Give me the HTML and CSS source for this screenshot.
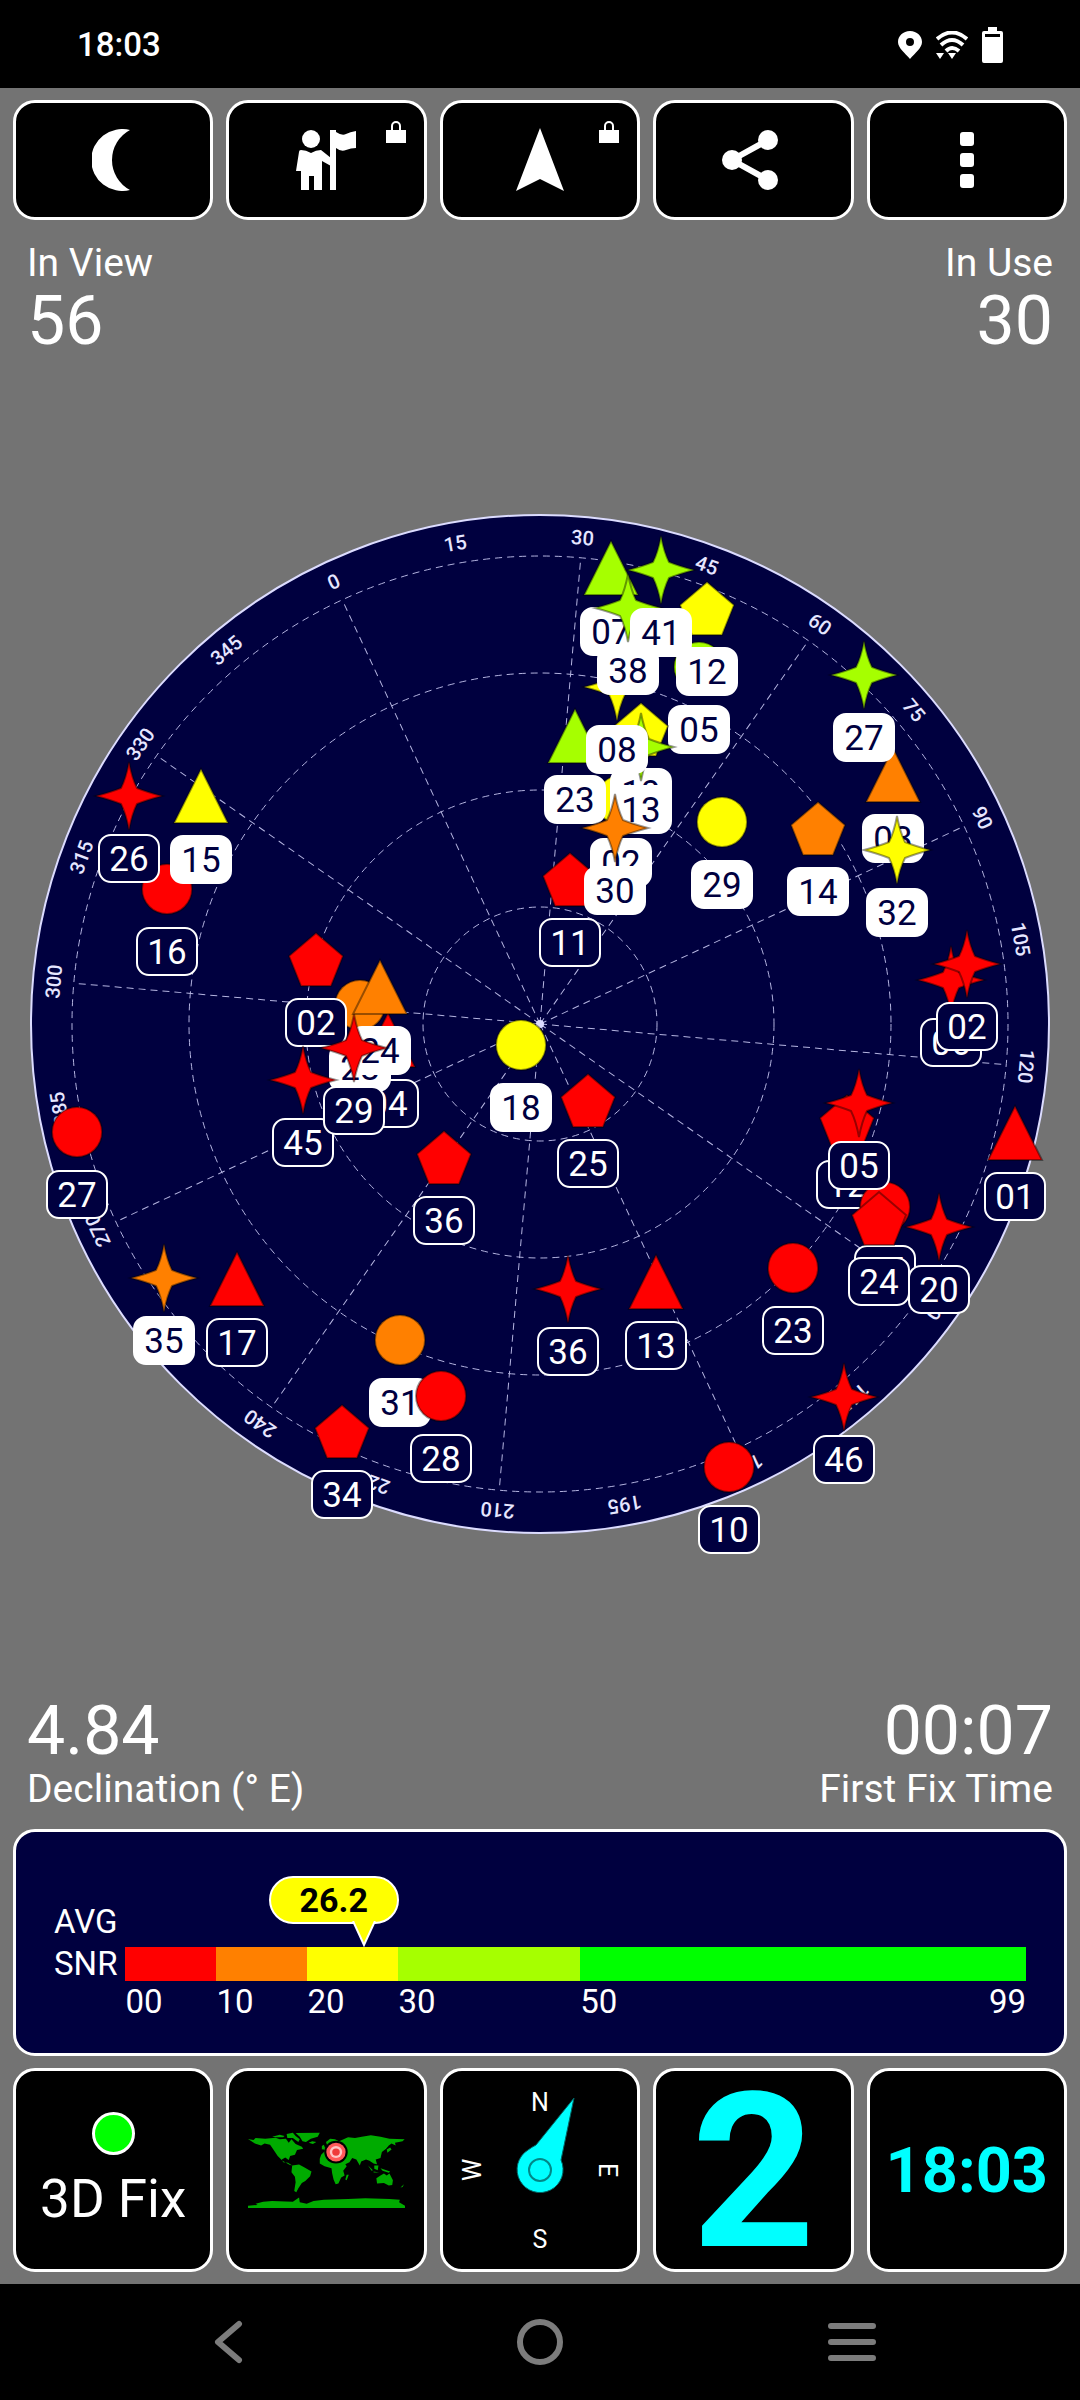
FILE: index.html
```html
<!DOCTYPE html>
<html lang="en">
    <head>
        <meta charset="utf-8">
        <meta name="viewport" content="width=device-width, initial-scale=1">
        <title>GNSS Status</title>

        <link rel="stylesheet" href="styles.css">
        <script src="sky.js" defer></script>
    </head>

    <body>
        <header class="status-bar">
            <span class="status-time">18:03</span>
            <div class="status-icons">
                <svg width="24" height="28" viewBox="0 0 24 28"><path fill="#fff" fill-rule="evenodd" d="M12 0C5 0 0 5 0 11C0 17 7 22 12 28C17 22 24 17 24 11C24 5 19 0 12 0ZM12 7A4 4 0 1 1 12 15A4 4 0 1 1 12 7Z"/></svg>
                <svg width="32" height="28" viewBox="0 0 32 28">
                    <g fill="none" stroke="#fff" stroke-width="4">
                        <path d="M1 8Q16 -5 31 8"/>
                        <path d="M5 14Q16 4 27 14"/>
                        <path d="M10 20Q16 14 23 20"/>
                    </g>
                    <path fill="#fff" d="M0 22h8l-4 6zM12 22h8l-4 6z"/>
                </svg>
                <svg width="21" height="36" viewBox="0 0 21 36"><path fill="#fff" fill-rule="evenodd" d="M6 0H15V4H19Q21 4 21 6V34Q21 36 19 36H2Q0 36 0 34V6Q0 4 2 4H6ZM3 7V10H18V7Z"/></svg>
            </div>
        </header>

        <main>
            <div class="toolbar">
                <button type="button" class="tool" aria-label="Night mode">
                    <svg width="42" height="62" viewBox="0 0 42 62"><path fill="#fff" d="M38 1A31 31 0 1 0 38 61A34 34 0 0 1 38 1Z"/></svg>
                </button>
                <button type="button" class="tool" aria-label="Waypoints, locked">
                    <svg width="62" height="60" viewBox="0 0 62 60">
                        <circle cx="15" cy="9" r="9" fill="#fff"/>
                        <path fill="#fff" d="M34 0H40V60H34ZM40 2Q46 6 50 4T60 1V18Q55 18 50 20T40 18Z"/>
                        <path fill="#fff" d="M5 20Q10 20 15 23Q20 20 25 20L35 28V36L26 31V60H18V46H13V60H5V41H0L3 22Q3 20 5 20Z"/>
                    </svg>
                    <svg class="lock" width="20" height="22" viewBox="0 0 20 22"><path fill="#fff" d="M0 9H20V22H0Z"/><path fill="none" stroke="#fff" stroke-width="2" d="M6 10V5A4 4 0 0 1 14 5V10"/></svg>
                </button>
                <button type="button" class="tool" aria-label="Navigate, locked">
                    <svg width="48" height="64" viewBox="0 0 48 64"><path fill="#fff" d="M24 0L48 63L24 51L0 63Z"/></svg>
                    <svg class="lock" width="20" height="22" viewBox="0 0 20 22"><path fill="#fff" d="M0 9H20V22H0Z"/><path fill="none" stroke="#fff" stroke-width="2" d="M6 10V5A4 4 0 0 1 14 5V10"/></svg>
                </button>
                <button type="button" class="tool" aria-label="Share">
                    <svg width="62" height="60" viewBox="0 0 62 60">
                        <path fill="none" stroke="#fff" stroke-width="6" d="M46 10L10 30L46 50"/>
                        <g fill="#fff"><circle cx="46" cy="10" r="10"/><circle cx="10" cy="30" r="10"/><circle cx="46" cy="50" r="10"/></g>
                    </svg>
                </button>
                <button type="button" class="tool" aria-label="More options">
                    <svg width="14" height="56" viewBox="0 0 14 56" fill="#fff"><rect width="14" height="14" rx="3"/><rect y="21" width="14" height="14" rx="3"/><rect y="42" width="14" height="14" rx="3"/></svg>
                </button>
            </div>

            <div class="info-row info-top">
                <div class="info">
                    <div class="info-label">In View</div>
                    <div class="info-value">56</div>
                </div>
                <div class="info info-right">
                    <div class="info-label">In Use</div>
                    <div class="info-value">30</div>
                </div>
            </div>

            <div class="sky">
                <svg class="sky-plot" id="sky_plot" viewBox="-540 -518 1080 1040" role="img" aria-label="Satellite sky view"></svg>
            </div>

            <div class="info-row info-bottom">
                <div class="info">
                    <div class="info-value">4.84</div>
                    <div class="info-label">Declination (° E)</div>
                </div>
                <div class="info info-right">
                    <div class="info-value">00:07</div>
                    <div class="info-label">First Fix Time</div>
                </div>
            </div>

            <section class="snr">
                <div class="snr-name">AVG<br>SNR</div>
                <div class="snr-meter">
                    <div class="snr-bubble" style="left: 26.46%">26.2</div>
                    <svg class="snr-pointer" style="left: 26.46%" width="24" height="26" viewBox="0 0 24 26"><path fill="#ff0" stroke="#fff" stroke-width="2" d="M1 0L12 24L23 0"/></svg>
                    <div class="snr-seg seg-10"><i class="red"></i><span>00</span></div>
                    <div class="snr-seg seg-10"><i class="orange"></i><span>10</span></div>
                    <div class="snr-seg seg-10"><i class="yellow"></i><span>20</span></div>
                    <div class="snr-seg seg-20"><i class="lime"></i><span>30</span></div>
                    <div class="snr-seg seg-49"><i class="green"></i><span>50</span><span>99</span></div>
                </div>
            </section>

            <div class="tiles">
                <div class="tile tile-fix">
                    <span class="fix-light"></span>
                    <span class="fix-text">3D Fix</span>
                </div>
                <div class="tile">
                    <svg width="157" height="76" viewBox="720 250 455 227" preserveAspectRatio="none">
                        <g fill="#00ab00">
                            <path d="M720 271L736 274L742 268L770 270L800 267L812 272L830 270L838 282L846 272L858 286L876 294L880 300L862 304L856 318L842 322L838 334L828 326L818 332L822 340L836 342L848 350L840 348L820 336L806 322L792 300L784 288L768 284L758 290L740 284Z"/>
                            <path d="M790 264L812 258L826 262L822 266L800 266ZM832 256L850 252L858 262L870 272L866 280L850 268L834 268Z"/>
                            <path d="M858 253L928 252L922 264L902 270L888 280L878 278L870 264Z"/>
                            <path d="M848 350L868 347L884 356L904 368L900 382L886 396L876 402L866 418L860 430L854 426L858 400L856 384L846 370Z"/>
                            <path d="M932 318L944 306L938 302L950 292L946 280L958 270L972 272L984 278L1010 266L1030 268L1050 264L1076 260L1104 264L1130 270L1174 272L1168 278L1146 282L1148 290L1136 284L1128 290L1120 300L1108 310L1104 328L1090 332L1094 346L1084 344L1072 336L1062 332L1048 338L1044 350L1034 332L1022 328L1014 340L1002 346L1006 352L996 366L1000 380L990 386L982 404L974 406L968 392L964 374L962 358L942 352L928 344L928 330Z"/>
                            <path d="M1006 378L1012 378L1006 394L1002 392ZM1068 350L1082 364L1078 366ZM1086 350L1098 350L1096 364L1086 360ZM1104 358L1132 368L1128 372L1110 366ZM1084 368L1100 371L1084 371Z"/>
                            <path d="M1092 388L1104 380L1114 374L1122 380L1130 374L1140 394L1138 408L1128 410L1114 402L1094 404Z"/>
                            <path d="M1162 416L1172 406L1168 414ZM1122 302L1132 296L1136 302L1124 312ZM934 292L940 288L944 300L934 302ZM896 282L906 278L918 280L908 286Z"/>
                            <path d="M720 470L748 468L742 464L764 458L790 456L850 458L868 446L870 460L890 464L910 456L940 452L1010 450L1060 448L1130 450L1160 452L1158 460L1175 470V477H720Z"/>
                        </g>
                        <circle cx="975" cy="310" r="34" fill="#000"/>
                        <circle cx="975" cy="310" r="28" fill="#ff5a5a"/>
                        <circle cx="975" cy="310" r="18" fill="#ffc4c4"/>
                        <circle cx="975" cy="310" r="11" fill="#ef3a3a"/>
                    </svg>
                </div>
                <div class="tile">
                    <svg class="compass" width="184" height="184" viewBox="-12 -12 184 184">
                        <text x="80" y="21">N</text>
                        <text x="80" y="158">S</text>
                        <text x="12" y="89" transform="rotate(-90 12 80)">W</text>
                        <text x="148" y="89" transform="rotate(90 148 80)">E</text>
                        <path fill="#0ff" stroke="#066" d="M114 8L101 70A23 23 0 1 1 68 60Q72 57 76 55Z"/>
                        <circle cx="80" cy="80" r="11" fill="#0ff" stroke="#088" stroke-width="2"/>
                    </svg>
                </div>
                <div class="tile tile-count">2</div>
                <div class="tile tile-clock">18:03</div>
            </div>
        </main>

        <nav class="nav-bar">
            <button type="button" aria-label="Back">
                <svg width="30" height="44" viewBox="0 0 30 44"><path d="M26 4L5 22L26 40"/></svg>
            </button>
            <button type="button" aria-label="Home">
                <svg width="48" height="48" viewBox="0 0 48 48"><circle cx="24" cy="24" r="20"/></svg>
            </button>
            <button type="button" aria-label="Recent apps">
                <svg width="48" height="38" viewBox="0 0 48 38"><path d="M3 3H45M3 19H45M3 35H45"/></svg>
            </button>
        </nav>
    </body>
</html>
```
FILE: styles.css
```css
/* Page */
* {
    box-sizing: border-box;
}

body {
    margin: 0;
    min-height: 100vh;
    display: flex;
    flex-direction: column;
    font-family: Roboto, "Liberation Sans", sans-serif;
    background-color: #737373;
    color: #fff;
}

svg {
    display: block;
}

main {
    flex: 1;
    display: flex;
    flex-direction: column;
    padding: 12px 13px;
}

/* Status bar */
.status-bar {
    display: flex;
    justify-content: space-between;
    align-items: center;
    height: 88px;
    padding: 2px 77px 0;
    background: #000;
}

.status-time {
    font-size: 33px;
    font-weight: 500;
    line-height: 40px;
}

.status-icons {
    display: flex;
    align-items: center;
    gap: 14px;
}

/* Top buttons */
.toolbar,
.tiles {
    display: grid;
    grid-template-columns: repeat(5, 1fr);
    gap: 13px;
}

.tool,
.tile {
    position: relative;
    display: flex;
    align-items: center;
    justify-content: center;
    padding: 0;
    border: 3px solid #fff;
    border-radius: 22px;
    background: #000;
    color: #fff;
}

.tool {
    height: 120px;
    cursor: pointer;
}

.lock {
    position: absolute;
    top: 18px;
    right: 18px;
}

/* Corner readings */
.info-row {
    display: flex;
    justify-content: space-between;
    padding: 0 14px;
}

.info-top {
    padding-top: 20px;
}

.info-bottom {
    padding-bottom: 17px;
}

.info-right {
    text-align: right;
}

.info-label {
    font-size: 39px;
    line-height: 46px;
}

.info-value {
    font-size: 68px;
    line-height: 70px;
}

/* Sky view */
.sky {
    flex: 1;
    display: flex;
    align-items: center;
    margin: 0 -13px;
}

.sky-plot {
    width: 100%;
    overflow: visible;
}

.sky-disc {
    fill: #00003f;
    stroke: #dcdcff;
    stroke-width: 2;
}

.sky-grid {
    fill: none;
    stroke: #b4b4e0;
    stroke-width: 1;
    stroke-dasharray: 7 5;
}

.sky-angle {
    fill: #e6e6ff;
    font-size: 20px;
    font-weight: 500;
    text-anchor: middle;
}

.sat-icon {
    stroke: rgba(0, 0, 0, 0.4);
    stroke-width: 2;
}

.sat-box {
    fill: #00003f;
    stroke: #fff;
    stroke-width: 2;
}

.sat-text {
    fill: #fff;
    font-size: 35px;
    text-anchor: middle;
}

.used .sat-box {
    fill: #fff;
}

.used .sat-text {
    fill: #00003f;
}

/* Average SNR */
.snr {
    display: flex;
    gap: 8px;
    margin-bottom: 12px;
    padding: 69px 38px 30px;
    border: 3px solid #fff;
    border-radius: 22px;
    background: #00003f;
}

.snr-name,
.snr-seg {
    font-size: 33px;
    line-height: 42px;
}

.snr-meter {
    position: relative;
    flex: 1;
    display: flex;
    padding-top: 46px;
}

.snr-seg {
    display: flex;
    flex-wrap: wrap;
    justify-content: space-between;
    min-width: 0;
}

.snr-seg i {
    width: 100%;
    height: 34px;
}

.seg-10 { flex: 10 0 0; }
.seg-20 { flex: 20 0 0; }
.seg-49 { flex: 49 0 0; }

.red { background: #f00; }
.orange { background: #ff8000; }
.yellow { background: #ff0; }
.lime { background: #a6ff00; }
.green { background: #0f0; }

/* the pointer tip marks the value, the bubble sits left of it */
.snr-bubble {
    position: absolute;
    top: -25px;
    width: 130px;
    margin-left: -95px;
    border: 2px solid #fff;
    border-radius: 24px;
    background: #ff0;
    color: #000;
    font-size: 34px;
    font-weight: bold;
    line-height: 44px;
    text-align: center;
}

.snr-pointer {
    position: absolute;
    top: 20px;
    margin-left: -12px;
}

/* Bottom tiles */
.tile {
    height: 204px;
}

.tile-fix {
    flex-direction: column;
    gap: 14px;
}

.fix-light {
    width: 43px;
    height: 43px;
    border: 3px solid #fff;
    border-radius: 50%;
    background: #0f0;
}

.fix-text {
    font-size: 53px;
    line-height: 60px;
}

.compass text {
    fill: #fff;
    font-size: 25px;
    text-anchor: middle;
}

.tile-count,
.tile-clock {
    color: #0ff;
    font-weight: bold;
}

.tile-count {
    padding-top: 6px;
    font-size: 216px;
    line-height: 192px;
}

.tile-clock {
    font-size: 63px;
}

/* Navigation bar */
.nav-bar {
    display: grid;
    grid-template-columns: repeat(3, 1fr);
    height: 116px;
    padding: 0 72px;
    background: #000;
}

.nav-bar button {
    display: flex;
    align-items: center;
    justify-content: center;
    border: none;
    background: none;
    cursor: pointer;
}

.nav-bar svg {
    fill: none;
    stroke: #7c7c7c;
    stroke-width: 6;
    stroke-linecap: round;
    stroke-linejoin: round;
}
```
FILE: sky.js
```js
const NS = "http://www.w3.org/2000/svg";
const RADIUS = 509;
const RING = 117;
const HEADING = 25;

const COLORS = { r: "#ff0000", o: "#ff8000", y: "#ffff00", g: "#a6ff00" };

const SHAPES = {
    circle: "M-25 0A25 25 0 1 1 25 0A25 25 0 1 1 -25 0Z",
    tri: "M0 -28L27 26H-27Z",
    penta: "M0 -27L27 -4L15 26H-15L-27 -4Z",
    star: "M0 -34Q3 -18 8 -8Q18 -4 33 0Q18 4 8 8Q3 18 0 34Q-3 18 -8 8Q-18 4 -33 0Q-18 -4 -8 -8Q-3 -18 0 -34Z"
};

// [id, shape, color, x, y, used], drawn in this order
const SATS = [
    ["05", "circle", "g", 159, -357, 1],
    ["02", "circle", "y", 81, -224, 1],
    ["23", "tri", "g", 35, -287, 1],
    ["19", "penta", "y", 101, -294, 1],
    ["13", "star", "g", 101, -277, 1],
    ["08", "star", "y", 77, -337, 1],
    ["07", "tri", "g", 71, -455, 1],
    ["12", "penta", "y", 167, -415, 1],
    ["38", "star", "g", 88, -416, 1],
    ["41", "star", "g", 121, -454, 1],
    ["11", "penta", "r", 30, -144, 0],
    ["30", "star", "o", 75, -196, 1],
    ["03", "tri", "o", 353, -248, 1],
    ["27", "star", "g", 324, -349, 1],
    ["32", "star", "y", 357, -174, 1],
    ["14", "penta", "o", 278, -195, 1],
    ["29", "circle", "y", 182, -202, 1],
    ["16", "circle", "r", -373, -135, 0],
    ["26", "star", "r", -411, -228, 0],
    ["15", "tri", "y", -339, -227, 1],
    ["04", "tri", "r", -152, 17, 0],
    ["28", "circle", "o", -180, -19, 1],
    ["24", "tri", "o", -160, -36, 1],
    ["02", "penta", "r", -224, -64, 0],
    ["45", "star", "r", -237, 56, 0],
    ["29", "star", "r", -186, 24, 0],
    ["18", "circle", "y", -19, 21, 1],
    ["25", "penta", "r", 48, 77, 0],
    ["36", "penta", "r", -96, 134, 0],
    ["27", "circle", "r", -463, 108, 0],
    ["35", "star", "o", -376, 254, 1],
    ["17", "tri", "r", -303, 256, 0],
    ["31", "circle", "o", -140, 316, 1],
    ["28", "circle", "r", -99, 372, 0],
    ["34", "penta", "r", -198, 408, 0],
    ["36", "star", "r", 28, 265, 0],
    ["13", "tri", "r", 116, 259, 0],
    ["23", "circle", "r", 253, 244, 0],
    ["46", "star", "r", 304, 373, 0],
    ["10", "circle", "r", 189, 443, 0],
    ["12", "penta", "r", 307, 98, 0],
    ["25", "circle", "r", 345, 183, 0],
    ["05", "star", "r", 319, 79, 0],
    ["24", "penta", "r", 339, 195, 0],
    ["20", "star", "r", 399, 203, 0],
    ["01", "tri", "r", 475, 110, 0],
    ["06", "star", "r", 411, -44, 0],
    ["02", "star", "r", 427, -60, 0]
];

function add (parent, name, attrs, text) {
    const el = document.createElementNS(NS, name);
    for (const key in attrs) el.setAttribute(key, attrs[key]);
    if (text !== undefined) el.textContent = text;
    parent.appendChild(el);
    return el;
}

const plot = document.getElementById("sky_plot");

add(plot, "circle", { class: "sky-disc", r: RADIUS });
for (let i = 1; i <= 4; i++) {
    add(plot, "circle", { class: "sky-grid", r: RING * i });
}

for (let deg = 0; deg < 360; deg += 15) {
    const turn = `rotate(${deg - HEADING})`;
    if (deg % 30 === 0) {
        add(plot, "path", { class: "sky-grid", d: "M0 0V-463", transform: turn });
    }
    add(plot, "text", { class: "sky-angle", y: -481, transform: turn }, deg);
}
add(plot, "circle", { r: 4, fill: "#dcdcff" });

for (const [id, shape, color, x, y, used] of SATS) {
    const sat = add(plot, "g", { class: used ? "used" : "unused", transform: `translate(${x} ${y})` });
    add(sat, "path", { class: "sat-icon", d: SHAPES[shape], fill: COLORS[color] });
    add(sat, "rect", { class: "sat-box", x: -30, y: 39, width: 60, height: 47, rx: 12 });
    add(sat, "text", { class: "sat-text", y: 75 }, id);
}
```
